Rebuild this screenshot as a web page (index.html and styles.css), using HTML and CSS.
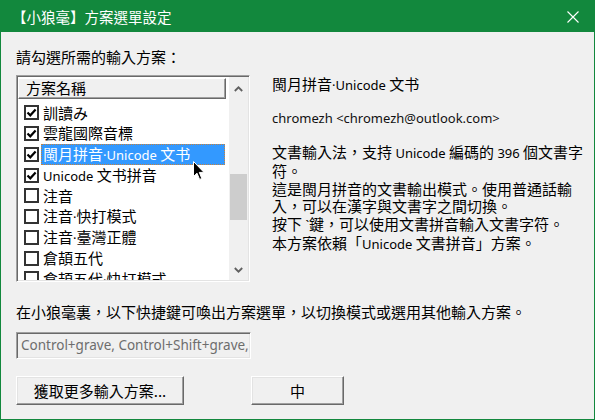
FILE: index.html
```html
<!DOCTYPE html>
<html lang="zh-Hant">
<head>
<meta charset="utf-8">
<title>方案選單設定</title>
<link rel="stylesheet" href="styles.css">
</head>
<body>
<div class="window">
  <div class="titlebar">
    <span class="title">【小狼毫】方案選單設定</span>
    <svg class="close" width="12" height="12" viewBox="0 0 12 12"><path d="M0.5 0.5L11.5 11.5M11.5 0.5L0.5 11.5" stroke="#fff" stroke-width="1.1" fill="none"/></svg>
  </div>
  <div class="content">
    <div class="prompt">請勾選所需的輸入方案：</div>
    <div class="main">
      <div class="listbox">
        <div class="list-col">
          <div class="list-header">方案名稱</div>
          <div class="rows">
            <div class="row"><span class="cb"><svg width="11" height="11" viewBox="0 0 11 11"><path d="M1.5 5.5L4.3 8.3L9.6 2.6" stroke="#000" stroke-width="2.2" fill="none"/></svg></span><span class="label">訓讀み</span></div>
            <div class="row"><span class="cb"><svg width="11" height="11" viewBox="0 0 11 11"><path d="M1.5 5.5L4.3 8.3L9.6 2.6" stroke="#000" stroke-width="2.2" fill="none"/></svg></span><span class="label">雲龍國際音標</span></div>
            <div class="row"><span class="cb"><svg width="11" height="11" viewBox="0 0 11 11"><path d="M1.5 5.5L4.3 8.3L9.6 2.6" stroke="#000" stroke-width="2.2" fill="none"/></svg></span><span class="label sel">閩月拼音<span class="lat">·Unicode</span> 文书</span></div>
            <div class="row"><span class="cb"><svg width="11" height="11" viewBox="0 0 11 11"><path d="M1.5 5.5L4.3 8.3L9.6 2.6" stroke="#000" stroke-width="2.2" fill="none"/></svg></span><span class="label"><span class="lat">Unicode</span> 文书拼音</span></div>
            <div class="row"><span class="cb"></span><span class="label">注音</span></div>
            <div class="row"><span class="cb"></span><span class="label">注音<span class="lat">·</span>快打模式</span></div>
            <div class="row"><span class="cb"></span><span class="label">注音<span class="lat">·</span>臺灣正體</span></div>
            <div class="row"><span class="cb"></span><span class="label">倉頡五代</span></div>
            <div class="row"><span class="cb"></span><span class="label">倉頡五代<span class="lat">·</span>快打模式</span></div>
          </div>
        </div>
        <div class="scrollbar">
          <div class="sb-up"><svg width="9" height="6" viewBox="0 0 9 6"><path d="M0.8 5L4.5 1.3L8.2 5" stroke="#606060" stroke-width="1.8" fill="none"/></svg></div>
          <div class="sb-track"><div class="sb-thumb"></div></div>
          <div class="sb-down"><svg width="9" height="6" viewBox="0 0 9 6"><path d="M0.8 1L4.5 4.7L8.2 1" stroke="#606060" stroke-width="1.8" fill="none"/></svg></div>
        </div>
      </div>
      <div class="info">
        <div class="info-title">閩月拼音<span class="lat">·Unicode</span> 文书</div>
        <div class="info-author">chromezh &lt;chromezh@outlook.com&gt;</div>
        <div class="info-desc">文書輸入法，支持 <span class="lat">Unicode</span> 編碼的 <span class="lat">396</span> 個文書字<br>符。<br>這是閩月拼音的文書輸出模式。使用普通話輸<br>入，可以在漢字與文書字之間切換。<br>按下 <span class="lat">`</span>鍵，可以使用文書拼音輸入文書字符。<br>本方案依賴「<span class="lat">Unicode</span> 文書拼音」方案。</div>
      </div>
    </div>
    <div class="hint">在小狼毫裏，以下快捷鍵可喚出方案選單，以切換模式或選用其他輸入方案。</div>
    <div class="hotkeys">Control+grave, Control+Shift+grave, F4</div>
    <div class="buttons">
      <button class="btn btn-more">獲取更多輸入方案...</button>
      <button class="btn btn-mode">中</button>
    </div>
  </div>
  <svg class="cursor" width="13" height="20" viewBox="0 0 13 20"><path d="M0.5 0.5L0.5 15.5L4 12.2L6.6 18.4L8.8 17.5L6.3 11.4L11 11.4Z" fill="#000" stroke="#fff" stroke-width="1"/></svg>
</div>
</body>
</html>
```
FILE: styles.css
```css
* { box-sizing: border-box; }
body {
  margin: 0;
  font-family: "Noto Sans CJK TC", "Noto Sans", sans-serif;
  font-size: 15px;
  color: #000;
}
.window {
  position: relative;
  width: 595px;
  height: 420px;
  background: #f0f0f0;
  border: 1px solid #12883d;
  border-top: 0;
  overflow: hidden;
}
.titlebar {
  height: 32px;
  background: #12883d;
  color: #fff;
  display: flex;
  align-items: center;
  justify-content: space-between;
  padding: 2px 15px 0 11px;
}
.title { font-size: 14.5px; line-height: 18px; }
.close { display: block; margin-top: -1px; }
.content { padding: 15px 0 0 15px; }
.prompt { line-height: 20px; }
.main { display: flex; margin-top: 8px; align-items: flex-start; }
.listbox {
  width: 234px;
  height: 207px;
  display: flex;
  padding: 1px;
  background: #fff;
  border: 1px solid;
  border-color: #a0a0a0 #fff #fff #a0a0a0;
  box-shadow: inset 1px 1px #696969, inset -1px -1px #e3e3e3;
}
.list-col { width: 211px; overflow: hidden; }
.list-header {
  height: 21px;
  margin: 1px 3px 0 0;
  padding-left: 7px;
  line-height: 18px;
  background: #f0f0f0;
  border-top: 1px solid #fff;
  border-left: 1px solid #fff;
  border-right: 1px solid #696969;
  border-bottom: 1px solid #696969;
  box-shadow: inset -1px -1px #a0a0a0;
}
.rows { padding-top: 3.5px; }
.row { height: 20.75px; display: flex; align-items: stretch; }
.cb {
  align-self: center;
  width: 15px;
  height: 15px;
  margin-left: 6px;
  border: 2px solid #333;
  background: #fff;
  display: flex;
  align-items: center;
  justify-content: center;
}
.cb svg { display: block; }
.label {
  flex: 1;
  margin: 0 4px 0 2px;
  padding-left: 1px;
  border: 1px solid transparent;
  line-height: 18.75px;
  white-space: nowrap;
}
.label.sel {
  background: #3399ff;
  color: #fff;
  border: 1px dotted #c8823c;
}
.lat { font-family: "Noto Sans", sans-serif; font-size: 13px; }
.scrollbar {
  width: 19px;
  background: #f0f0f0;
  display: flex;
  flex-direction: column;
}
.sb-up, .sb-down { display: flex; align-items: center; justify-content: center; }
.sb-up { height: 24px; }
.sb-down { height: 20px; }
.sb-up svg, .sb-down svg { display: block; }
.sb-track { flex: 1; }
.sb-thumb { margin: 73px 1px 0; height: 46px; background: #cdcdcd; }
.info { margin-left: 22px; }
.info-title { line-height: 18px; }
.info-author {
  margin-top: 15px;
  line-height: 18px;
  font-family: "Noto Sans", sans-serif;
  font-size: 13px;
  color: #111;
}
.info-desc { margin-top: 15.75px; line-height: 17.5px; white-space: nowrap; }
.hint { margin-top: 20px; line-height: 20px; }
.hotkeys {
  margin-top: 10px;
  width: 235px;
  height: 27px;
  padding-left: 4px;
  border: 1px solid;
  border-color: #a0a0a0 #fff #fff #a0a0a0;
  box-shadow: inset 1px 1px #696969, inset -1px -1px #e3e3e3;
  font-family: "Noto Sans", sans-serif;
  font-size: 13.5px;
  line-height: 24px;
  color: #6d6d6d;
  white-space: nowrap;
  overflow: hidden;
}
.buttons { display: flex; gap: 67px; margin-top: 17px; }
.btn {
  height: 29px;
  padding: 0;
  font-family: "Noto Sans CJK TC", "Noto Sans", sans-serif;
  font-size: 15px;
  color: #000;
  background: #f0f0f0;
  border: 1px solid;
  border-color: #fff #696969 #696969 #fff;
  box-shadow: inset -1px -1px #a0a0a0, inset 1px 1px #e3e3e3;
  border-radius: 0;
}
.btn-more { width: 168px; }
.btn-mode { width: 93px; }
.cursor { position: absolute; left: 192px; top: 161px; }
```
